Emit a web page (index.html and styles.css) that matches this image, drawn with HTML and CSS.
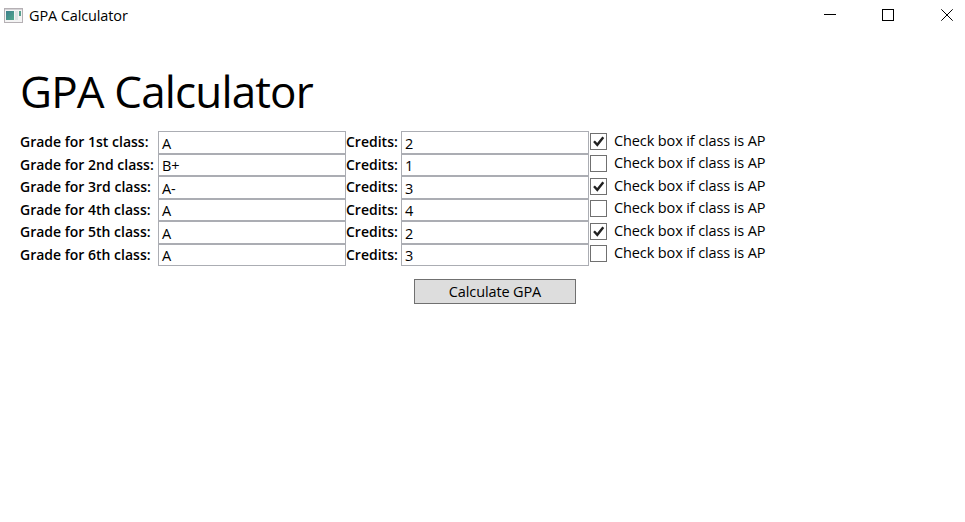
FILE: index.html
```html
<!DOCTYPE html>
<html lang="en">
<head>
<meta charset="utf-8">
<title>GPA Calculator</title>
<link rel="stylesheet" href="styles.css">
</head>
<body>
<header class="titlebar">
  <svg class="app-icon" width="19" height="15" viewBox="0 0 19 15"><defs><linearGradient id="g" x1="0" y1="0" x2="1" y2="1"><stop offset="0" stop-color="#3c7f8c"/><stop offset="1" stop-color="#52a88c"/></linearGradient></defs><rect x=".5" y=".5" width="18" height="14" fill="#f4f4f4" stroke="#b5b0b4"/><path d="M1 1.5h17" stroke="#d5d3d6"/><rect x="2" y="3" width="8" height="9" fill="url(#g)"/><path d="M12.500 3v9" stroke="#dce3e3" stroke-width="3"/><path d="M16 3v5" stroke="#57a18d" stroke-width="2"/></svg>
  <span class="caption">GPA Calculator</span>
  <div class="controls">
    <svg width="12" height="12" viewBox="0 0 12 12"><path d="M0 5.500h12"/></svg>
    <svg width="12" height="12" viewBox="0 0 12 12"><rect x=".5" y=".5" width="11" height="11"/></svg>
    <svg width="12" height="12" viewBox="0 0 12 12"><path d="M.3.300l11.400 11.400M11.700.300L.3 11.700"/></svg>
  </div>
</header>
<main>
  <h1>GPA Calculator</h1>
  <div class="classes">
    <div class="row"><span class="label">Grade for 1st class:</span><span class="field">A</span><span class="label credits">Credits:</span><span class="field">2</span><span class="check"><svg class="box" width="17" height="17" viewBox="0 0 17 17"><rect x=".5" y=".5" width="16" height="16"/><path d="M4 8.200l3.300 3.600L13.300 4.200"/></svg><span class="check-text">Check box if class is AP</span></span></div>
    <div class="row"><span class="label">Grade for 2nd class:</span><span class="field">B+</span><span class="label credits">Credits:</span><span class="field">1</span><span class="check"><svg class="box" width="17" height="17" viewBox="0 0 17 17"><rect x=".5" y=".5" width="16" height="16"/></svg><span class="check-text">Check box if class is AP</span></span></div>
    <div class="row"><span class="label">Grade for 3rd class:</span><span class="field">A-</span><span class="label credits">Credits:</span><span class="field">3</span><span class="check"><svg class="box" width="17" height="17" viewBox="0 0 17 17"><rect x=".5" y=".5" width="16" height="16"/><path d="M4 8.200l3.300 3.600L13.300 4.200"/></svg><span class="check-text">Check box if class is AP</span></span></div>
    <div class="row"><span class="label">Grade for 4th class:</span><span class="field">A</span><span class="label credits">Credits:</span><span class="field">4</span><span class="check"><svg class="box" width="17" height="17" viewBox="0 0 17 17"><rect x=".5" y=".5" width="16" height="16"/></svg><span class="check-text">Check box if class is AP</span></span></div>
    <div class="row"><span class="label">Grade for 5th class:</span><span class="field">A</span><span class="label credits">Credits:</span><span class="field">2</span><span class="check"><svg class="box" width="17" height="17" viewBox="0 0 17 17"><rect x=".5" y=".5" width="16" height="16"/><path d="M4 8.200l3.300 3.600L13.300 4.200"/></svg><span class="check-text">Check box if class is AP</span></span></div>
    <div class="row"><span class="label">Grade for 6th class:</span><span class="field">A</span><span class="label credits">Credits:</span><span class="field">3</span><span class="check"><svg class="box" width="17" height="17" viewBox="0 0 17 17"><rect x=".5" y=".5" width="16" height="16"/></svg><span class="check-text">Check box if class is AP</span></span></div>
  </div>
  <button class="calculate">Calculate GPA</button>
</main>
</body>
</html>
```
FILE: styles.css
```css
* { box-sizing: border-box; }
body {
  margin: 0;
  height: 522px;
  overflow: hidden;
  background: #fff;
  color: #000;
  font: 14.5px/20px "Open Sans", "Noto Sans", sans-serif;
  letter-spacing: -0.12px;
  white-space: nowrap;
}
svg { display: block; flex: none; }
.titlebar { display: flex; align-items: center; height: 30px; padding: 0 12px 0 4px; }
.caption { margin: 2px 0 0 6px; }
.controls { display: flex; gap: 46px; margin-left: auto; }
.controls svg { fill: none; stroke: #000; stroke-width: 1; }
.controls svg:last-child { margin-left: 1px; }
main { padding: 31px 20px 0; }
h1 { margin: 0; height: 70px; font-size: 44px; line-height: 60px; font-weight: 400; letter-spacing: -0.85px; }
.row {
  display: grid;
  grid-template-columns: 138px 188px 55px 188px auto;
  grid-template-rows: 100%;
  height: 23px;
}
.row:nth-child(even) { height: 22px; }
.label { font-size: 14px; font-weight: 600; line-height: 22px; letter-spacing: 0; }
.field { height: 100%; border: 1px solid #abadb3; padding-left: 3px; line-height: 23px; }
.row:nth-child(even) .field { line-height: 21px; }
.check { display: flex; padding: 2px 0 0 1px; }
.row:nth-child(even) .check { padding-top: 1px; }
.box { fill: #fff; stroke: #707070; height: 17px; }
.box path { fill: none; stroke: #212121; stroke-width: 2.400; }
.check-text { margin-left: 7px; line-height: 16px; }
.calculate {
  display: block;
  width: 162px;
  height: 25px;
  margin: 13px 0 0 394px;
  padding: 0;
  border: 1px solid #707070;
  border-radius: 0;
  background: #ddd;
  color: #000;
  font: inherit;
  letter-spacing: inherit;
}
```
